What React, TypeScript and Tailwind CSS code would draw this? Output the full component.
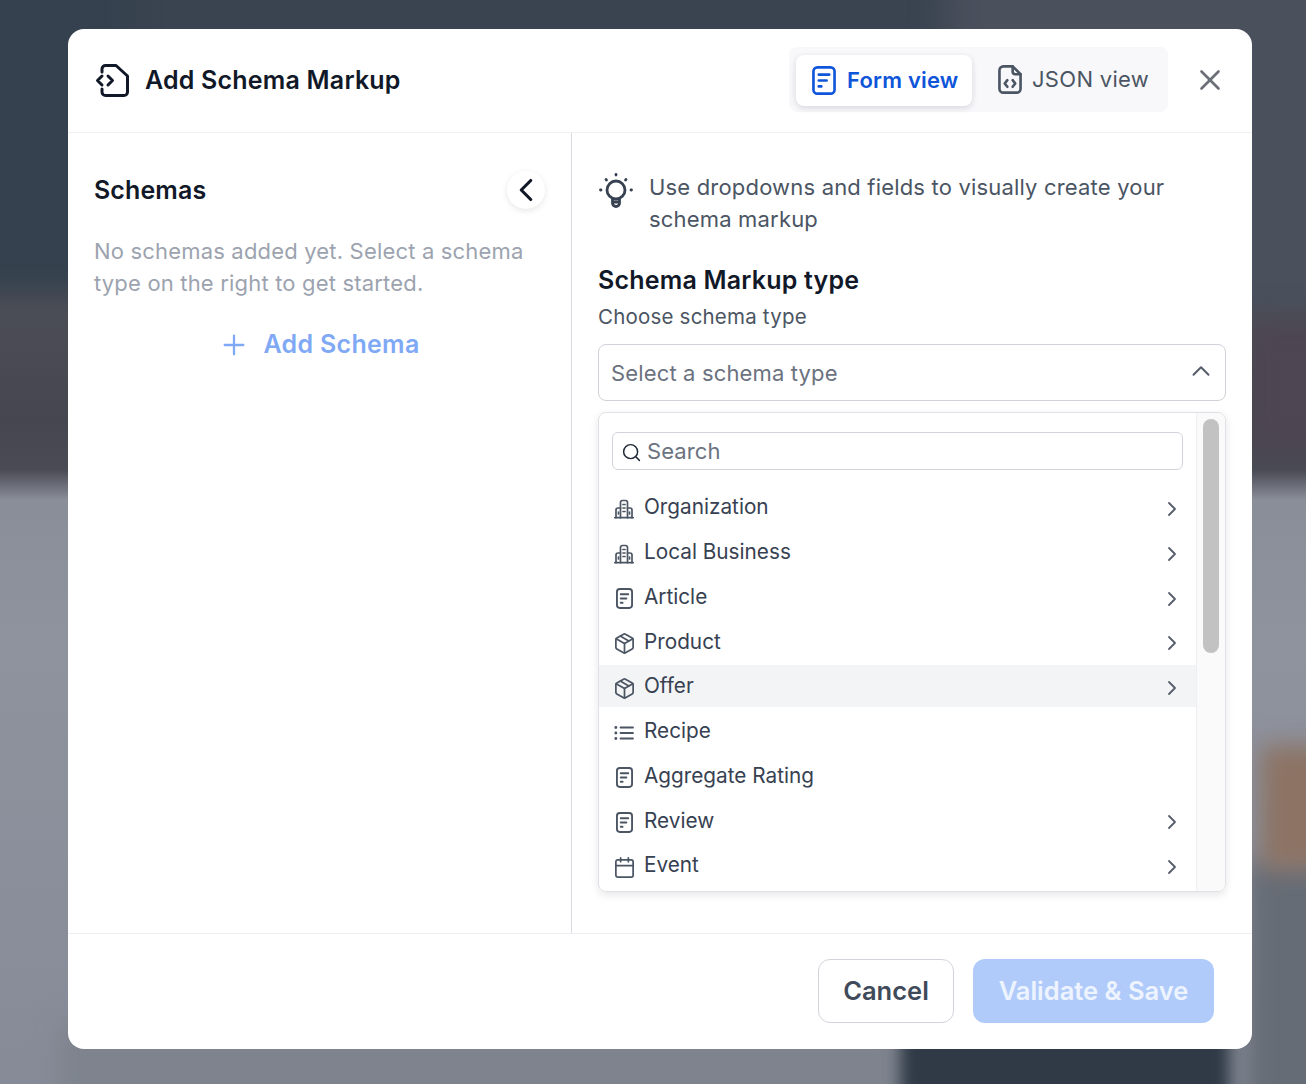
import { ChevronLeft, ChevronRight, ChevronUp, Plus, X, Search, Package, Calendar } from 'lucide-react'
import type { ReactNode } from 'react'

function DocLines({ className }: { className?: string }) {
  return (
    <svg viewBox="3 1 18 22" fill="none" stroke="currentColor" strokeWidth="2" strokeLinecap="round" className={className}>
      <rect x="4" y="2" width="16" height="20" rx="3" />
      <path d="M8 7.500h8M8 12h6M8 16.500h2" />
    </svg>
  )
}

function CodeFile({ className }: { className?: string }) {
  return (
    <svg viewBox="3 1 18 22" fill="none" stroke="currentColor" strokeWidth="2" strokeLinecap="round" strokeLinejoin="round" className={className}>
      <path d="M14 2H7a3 3 0 0 0-3 3v14a3 3 0 0 0 3 3h10a3 3 0 0 0 3-3V8z" />
      <path d="M14 2v4a2 2 0 0 0 2 2h4" />
      <path d="M10 12.500 8 15l2 2.500M14 12.500l2 2.500-2 2.500" />
    </svg>
  )
}

function SchemaLogo({ className }: { className?: string }) {
  return (
    <svg viewBox="0 0 36 36" fill="none" stroke="currentColor" strokeWidth="3" strokeLinecap="round" strokeLinejoin="round" className={className}>
      <path d="M7 10V7a3.500 3.500 0 0 1 3.500-3.500H21L32.500 14v16a3.500 3.500 0 0 1-3.500 3.500H10.500A3.500 3.500 0 0 1 7 30v-3" />
      <path d="M7 14l-4.500 4.500L7 23M13 14l4.500 4.500L13 23" />
    </svg>
  )
}

function Bulb({ className }: { className?: string }) {
  return (
    <svg viewBox="0 0 36 36" fill="none" stroke="currentColor" strokeWidth="2.800" strokeLinecap="round" strokeLinejoin="round" className={className}>
      <circle cx="18" cy="18" r="9" />
      <path d="M14.500 27v4a3.500 3.500 0 0 0 7 0v-4M15 30h6" />
      <path d="M18 2.500v.5M8 7.500l.5.5M28 7.500l-.5.5M2.500 18h.5M33 18h.5" />
    </svg>
  )
}

function Buildings({ className }: { className?: string }) {
  return (
    <svg viewBox="0 0 20 20" fill="none" stroke="currentColor" strokeWidth="1.700" strokeLinecap="round" strokeLinejoin="round" className={className}>
      <path d="M.8 18.700h18.400" />
      <path d="M6.500 18.700V3.500a2 2 0 0 1 2-2h3a2 2 0 0 1 2 2v15.200" />
      <path d="M6.500 9H4a2 2 0 0 0-2 2v7.700M13.500 9H16a2 2 0 0 1 2 2v7.700" />
      <path d="M9 5.500h2M9 9h2M9 12.500h2M4.500 13v2M15.500 13v2" />
    </svg>
  )
}

function ListIcon({ className }: { className?: string }) {
  return (
    <svg viewBox="0 0 20 20" fill="none" stroke="currentColor" strokeWidth="1.800" strokeLinecap="round" className={className}>
      <path d="M6.500 4.500h12.500M6.500 10h12.500M6.500 15.500h12.500" />
      <path d="M1.800 4.500h.1M1.800 10h.1M1.800 15.500h.1" strokeWidth="2.800" />
    </svg>
  )
}

type Item = { label: string; icon: ReactNode; arrow: boolean; hover?: boolean }

const iconClass = 'h-[20px] w-[20px] shrink-0 text-[#4b5563]'
const docClass = 'h-[21px] w-[17px] shrink-0 text-[#4b5563]'
const lucideClass = 'h-[23px] w-[23px] shrink-0 text-[#4b5563]'

const items: Item[] = [
  { label: 'Organization', icon: <Buildings className={iconClass} />, arrow: true },
  { label: 'Local Business', icon: <Buildings className={iconClass} />, arrow: true },
  { label: 'Article', icon: <DocLines className={docClass} />, arrow: true },
  { label: 'Product', icon: <Package className={lucideClass} strokeWidth={1.800} />, arrow: true },
  { label: 'Offer', icon: <Package className={lucideClass} strokeWidth={1.800} />, arrow: true, hover: true },
  { label: 'Recipe', icon: <ListIcon className={iconClass} />, arrow: false },
  { label: 'Aggregate Rating', icon: <DocLines className={docClass} />, arrow: false },
  { label: 'Review', icon: <DocLines className={docClass} />, arrow: true },
  { label: 'Event', icon: <Calendar className={lucideClass} strokeWidth={1.800} />, arrow: true },
]

function Backdrop() {
  return (
    <div className="absolute inset-0 overflow-hidden bg-[linear-gradient(to_bottom,#3a4450_0px,#3b4552_240px,#4c4e56_310px,#45464f_420px,#4a4b55_470px,#8a8e99_500px,#8f939e_640px,#868b97_1084px)]">
      <div className="absolute left-[-40px] top-[-40px] h-[330px] w-[170px] bg-[#35414e] blur-[14px]" />
      <div className="absolute right-[-40px] top-[-40px] h-[360px] w-[400px] bg-[#4a505c] blur-[16px]" />
      <div className="absolute right-[-40px] top-[320px] h-[130px] w-[100px] bg-[#4e4652] blur-[14px]" />
      <div className="absolute right-[-40px] top-[860px] h-[280px] w-[100px] bg-[#666c76] blur-[12px]" />
      <div className="absolute right-[-40px] top-[745px] h-[125px] w-[85px] bg-[#8c7364] blur-[12px]" />
      <div className="absolute bottom-[-40px] left-[60px] h-[100px] w-[840px] bg-[#7e838d] blur-[12px]" />
      <div className="absolute bottom-[-40px] right-[76px] h-[100px] w-[330px] bg-[#2f3a46] blur-[8px]" />
    </div>
  )
}

export default function App() {
  return (
    <div className="relative h-[1084px] w-[1306px] overflow-hidden font-['Inter',sans-serif]">
      <Backdrop />
      <div className="relative px-[68px] pt-[29px]">
        <div className="flex h-[1020px] w-[1184px] flex-col overflow-hidden rounded-2xl bg-white">
          <header className="flex h-[104px] shrink-0 items-center border-b border-[#f0f1f3] pb-[2px] pl-[27px] pr-[25px]">
            <SchemaLogo className="h-9 w-9 text-[#111827]" />
            <h1 className="ml-[14px] text-[25px] font-semibold leading-8 tracking-[0.2px] text-[#111827]">Add Schema Markup</h1>
            <div className="ml-auto flex h-[65px] w-[379px] items-center rounded-lg bg-[#f8f8fa] pl-[7px]">
              <div className="mt-[1px] flex h-[51px] w-[176px] items-center gap-[11px] rounded-lg bg-white pl-[16px] shadow-[0_2px_6px_rgba(17,24,39,0.14)]">
                <DocLines className="h-[29px] w-[24px] text-[#0f55d9]" />
                <span className="text-[22px] font-semibold tracking-[0.2px] text-[#0f55d9]">Form view</span>
              </div>
              <div className="ml-[26px] flex items-center gap-[10px]">
                <CodeFile className="h-[29px] w-[24px] text-[#4b5563]" />
                <span className="text-[22px] tracking-[0.3px] text-[#4b5563]">JSON view</span>
              </div>
            </div>
            <X className="ml-[25px] h-[34px] w-[34px] text-[#6b6f76]" strokeWidth={1.900} />
          </header>

          <div className="flex min-h-0 flex-1">
            <aside className="w-[504px] shrink-0 border-r border-[#d9dbe0] pl-[26px] pr-[26px] pt-[35px]">
              <div className="flex h-[44px] items-center justify-between">
                <h2 className="mt-[2px] text-[25px] font-semibold tracking-[0.1px] text-[#111827]">Schemas</h2>
                <div className="flex h-[38px] w-[38px] items-center justify-center rounded-full bg-white shadow-[0_2px_6px_rgba(17,24,39,0.1)]">
                  <ChevronLeft className="h-[38px] w-[38px] shrink-0 text-[#111827]" strokeWidth={2} />
                </div>
              </div>
              <p className="mt-[23px] text-[22px] leading-8 tracking-[0.18px] text-[#9ca3af]">
                No schemas added yet. Select a schema type on the right to get started.
              </p>
              <div className="mt-[29px] flex h-[34px] items-center justify-center gap-[13px] pr-[1px]">
                <Plus className="h-[32px] w-[32px] text-[#7fa8f5]" strokeWidth={1.700} />
                <span className="text-[25px] font-semibold tracking-[0.3px] text-[#7fa8f5]">Add Schema</span>
              </div>
            </aside>

            <main className="min-w-0 flex-1 pl-[26px] pr-[26px] pt-[38px]">
              <div className="flex items-start">
                <Bulb className="mt-[1px] h-9 w-9 shrink-0 text-[#374151]" />
                <p className="ml-[15px] text-[22px] leading-8 tracking-[0.18px] text-[#4b5563]">
                  Use dropdowns and fields to visually create your schema markup
                </p>
              </div>
              <h3 className="mt-[29px] text-[25px] font-semibold leading-8 tracking-[0.2px] text-[#111827]">Schema Markup type</h3>
              <p className="mt-[5px] text-[20.500px] leading-8 tracking-[0.2px] text-[#4b5563]">Choose schema type</p>
              <div className="mt-[11px] flex h-[57px] items-center justify-between rounded-lg border border-[#cfd2d8] pl-3 pr-[9px]">
                <span className="mt-[1px] text-[22px] tracking-[0.15px] text-[#6b7280]">Select a schema type</span>
                <ChevronUp className="mb-[3px] h-[30px] w-[30px] text-[#565d6b]" strokeWidth={1.600} />
              </div>

              <div className="mt-[11px] flex h-[480px] overflow-hidden rounded-lg border border-[#dfe1e6] shadow-[0_3px_8px_rgba(17,24,39,0.1)]">
                <div className="min-w-0 flex-1 pt-[19px]">
                  <div className="mx-[13px] flex h-[38px] items-center rounded-md border border-[#d1d5db] pl-[8px]">
                    <Search className="mt-[3px] h-[21px] w-[21px] text-[#1f2937]" strokeWidth={1.700} />
                    <span className="ml-[5px] text-[22px] tracking-[0.1px] text-[#6b7280]">Search</span>
                  </div>
                  <ul className="mt-[16px]">
                    {items.map(item => (
                      <li
                        key={item.label}
                        className={`mb-[2.750px] flex h-[42px] items-center pl-[15px] pr-[12px] ${item.hover ? 'bg-[#f3f4f6]' : ''}`}
                      >
                        <span className="mt-[4px] flex w-[20px] justify-center">{item.icon}</span>
                        <span className="ml-[10px] text-[20.750px] text-[#374151]">{item.label}</span>
                        {item.arrow && <ChevronRight className="ml-auto mt-[4px] h-6 w-6 text-[#565d6b]" strokeWidth={1.800} />}
                      </li>
                    ))}
                  </ul>
                </div>
                <div className="w-[29px] shrink-0 border-l border-[#eeeff2] bg-[#fafafa] pl-[6px] pt-[6px]">
                  <div className="h-[234px] w-4 rounded-full bg-[#c2c2c2]" />
                </div>
              </div>
            </main>
          </div>

          <footer className="flex h-[116px] shrink-0 items-center justify-end gap-[19px] border-t border-[#eceef1] pb-[2px] pr-[38px]">
            <button className="h-[64px] w-[136px] rounded-xl border border-[#d1d5db] bg-white pt-[2px] text-[25.500px] font-semibold text-[#3f4a5a]">Cancel</button>
            <button className="h-[64px] w-[241px] rounded-xl bg-[#b0cbfa] pt-[2px] text-[25.500px] font-semibold text-[#eef4ff]">Validate &amp; Save</button>
          </footer>
        </div>
      </div>
    </div>
  )
}
